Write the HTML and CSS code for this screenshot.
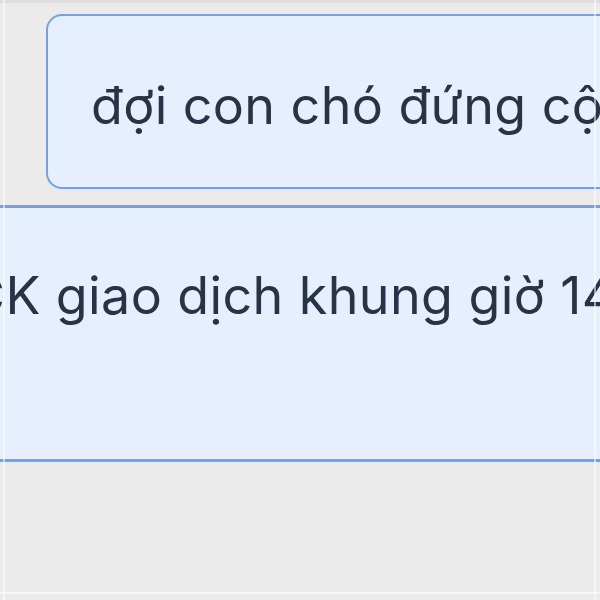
FILE: index.html
```html
<!DOCTYPE html>
<html lang="vi">
<head>
<meta charset="utf-8">
<link rel="stylesheet" href="styles.css">
</head>
<body>
<div class="frame">
  <div class="topband"></div>
  <div class="stack">
    <div class="bubble"><span class="txt">đợi con chó đứng cộng</span></div>
    <div class="row"><span class="txt">CK giao dịch khung giờ 14h</span></div>
  </div>
  <div class="bottomline"></div>
</div>
</body>
</html>
```
FILE: styles.css
```css
html, body {
  margin: 0;
  padding: 0;
  width: 600px;
  height: 600px;
  overflow: hidden;
  background: #ebebeb;
}
.frame {
  position: relative;
  width: 600px;
  height: 600px;
  overflow: hidden;
  font-family: Inter, "Noto Sans", sans-serif;
  color: #283347;
}
.frame::before,
.frame::after {
  content: "";
  position: absolute;
  top: 0;
  bottom: 0;
  width: 2px;
  background: rgba(255,255,255,0.55);
}
.frame::before { left: 3px; }
.frame::after { left: 594px; }
.bottomline {
  position: absolute;
  left: 0;
  right: 0;
  top: 592px;
  height: 2px;
  background: rgba(255,255,255,0.6);
}
.topband {
  height: 3px;
  background: #dedede;
}
.stack {
  display: flex;
  flex-direction: column;
  gap: 16px;
  padding-top: 11px;
}
.bubble {
  margin-left: 46px;
  width: 700px;
  height: 175px;
  box-sizing: border-box;
  border: 2px solid #70a2ec;
  border-radius: 16px;
  background: #e5effd;
  padding-top: 58px;
  padding-left: 43px;
  white-space: nowrap;
}
.row {
  margin-left: -33px;
  width: 700px;
  height: 257px;
  box-sizing: border-box;
  border-top: 3px solid #70a2ec;
  border-bottom: 3px solid #70a2ec;
  background: #e5effd;
  padding-top: 56px;
  padding-left: 0;
  white-space: nowrap;
}
.txt {
  display: block;
  font-size: 52px;
  line-height: 63px;
  letter-spacing: 0.4px;
}
```
